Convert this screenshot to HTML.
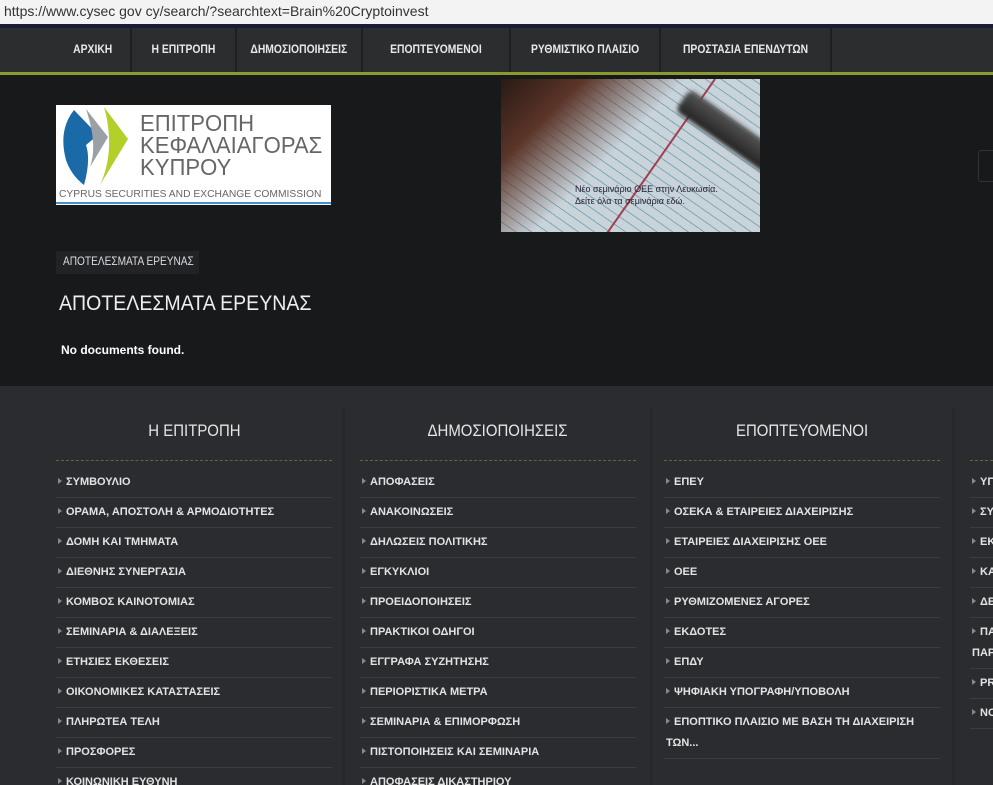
<!DOCTYPE html>
<html><head><meta charset="utf-8">
<style>
*{margin:0;padding:0;box-sizing:border-box}
html,body{width:993px;height:785px;overflow:hidden}
body{background:#18191b;font-family:"Liberation Sans","DejaVu Sans",sans-serif;position:relative}
.url{position:absolute;left:0;top:0;width:993px;height:24px;background:#f3f3f3;color:#333;font-size:14px;line-height:22px;padding-left:4px}
.blue{position:absolute;top:24px;left:0;width:993px;height:4px;background:#1b1a3a}
.nav{position:absolute;top:28px;left:0;width:993px;background:#2b2d2f;border-bottom:3px solid #8a9a2c;height:47px}
.nav span{position:absolute;top:0;height:44px;line-height:44px;color:#e8e8e8;font-size:11.5px;font-weight:bold;text-align:center;border-right:2px solid #1e1f21}
.nav span i{font-style:normal;display:inline-block;transform:scaleX(.9)}
.logo{position:absolute;left:56px;top:105px;width:275px;height:100px;background:#fff;overflow:hidden}
.footer{position:absolute;top:386px;left:0;width:993px;height:399px;background:#2a2c2f}
.col{position:absolute;top:408px;width:276px;overflow:hidden}
.col h3{font-weight:normal;font-size:17px;color:#e6e6e6;text-align:center;height:53px;line-height:46px;border-bottom:1px dashed #5f6a33}
.col h3 i{font-style:normal;display:inline-block;transform:scaleX(.88)}
.col ul{list-style:none;margin-top:7px}
.col li{font-size:11px;font-weight:bold;color:#e3e3e3;line-height:21px;padding:4px 0 4px 2px;border-bottom:1px solid #3a3c3f;white-space:normal}
.col li:before{content:"";display:inline-block;border-left:4px solid #888;border-top:3px solid transparent;border-bottom:3px solid transparent;margin-right:4px;vertical-align:1px}
.vd{position:absolute;top:408px;width:3px;height:377px;background:#27282a}
</style></head><body>
<div class="url">https://www.cysec gov cy/search/?searchtext=Brain%20Cryptoinvest</div>
<div class="blue"></div>
<div class="nav">
<span style="left:55px;width:77px"><i>ΑΡΧΙΚΗ</i></span>
<span style="left:132px;width:105px"><i>Η ΕΠΙΤΡΟΠΗ</i></span>
<span style="left:237px;width:126px"><i>ΔΗΜΟΣΙΟΠΟΙΗΣΕΙΣ</i></span>
<span style="left:363px;width:148px"><i>ΕΠΟΠΤΕΥΟΜΕΝΟΙ</i></span>
<span style="left:511px;width:150px"><i>ΡΥΘΜΙΣΤΙΚΟ ΠΛΑΙΣΙΟ</i></span>
<span style="left:661px;width:171px"><i>ΠΡΟΣΤΑΣΙΑ ΕΠΕΝΔΥΤΩΝ</i></span>
</div>
<div class="logo">
<svg width="275" height="100" style="position:absolute;left:0;top:0">
<path d="M18 5 Q2 25 10 55 Q15 70 28 80 Q35 55 30 40 L42 30 Z" fill="#1a6aa8"/>
<path d="M30 4 L52 32 L34 62 Q42 40 30 4Z" fill="#9aa0a6"/>
<path d="M48 2 L72 34 L44 80 Q60 45 48 2Z" fill="#b3cf2a"/>
<line x1="0" y1="98" x2="275" y2="98" stroke="#4a8fc8" stroke-width="2"/>
</svg>
<div style="position:absolute;left:84px;top:7px;font-size:23px;line-height:22px;color:#666;transform:scaleX(.96);transform-origin:left;white-space:nowrap">ΕΠΙΤΡΟΠΗ<br>ΚΕΦΑΛΑΙΑΓΟΡΑΣ<br>ΚΥΠΡΟΥ</div>
<div style="position:absolute;left:3px;top:83px;font-size:10.5px;color:#666;white-space:nowrap;transform:scaleX(.98);transform-origin:left">CYPRUS SECURITIES AND EXCHANGE COMMISSION</div>
</div>
<div style="position:absolute;left:501px;top:79px;width:259px;height:153px;overflow:hidden;background:repeating-linear-gradient(35deg,#c9d3da 0 8px,#7fa7b5 8px 9px)">
<div style="position:absolute;left:0;top:0;width:259px;height:153px;background:linear-gradient(135deg,#2a1a15 0,#5a3428 20%,rgba(0,0,0,0) 45%)"></div>
<div style="position:absolute;left:150px;top:-20px;width:2px;height:220px;background:#a04050;transform:rotate(35deg)"></div>
<div style="position:absolute;left:170px;top:45px;width:130px;height:26px;background:linear-gradient(#555,#222);transform:rotate(35deg);border-radius:6px;filter:blur(2px)"></div>
<div style="position:absolute;left:74px;top:104px;font-size:9px;line-height:12px;color:#223">Νέο σεμινάριο ΟΕΕ στην Λευκωσία.<br>Δείτε όλα τα σεμινάρια εδώ.</div>
</div>
<div style="position:absolute;left:978px;top:150px;width:20px;height:32px;border:1px solid #333;border-radius:3px"></div>
<div style="position:absolute;left:56px;top:251px;height:23px;width:143px;padding:0 7px;background:#222326;color:#ddd;font-size:11.5px;line-height:23px;white-space:nowrap"><span style="display:inline-block;transform:scaleX(.88);transform-origin:left">ΑΠΟΤΕΛΕΣΜΑΤΑ ΕΡΕΥΝΑΣ</span></div>
<div style="position:absolute;left:59px;top:292px;color:#eee;font-size:21px;transform:scaleX(.93);transform-origin:left;white-space:nowrap">ΑΠΟΤΕΛΕΣΜΑΤΑ ΕΡΕΥΝΑΣ</div>
<div style="position:absolute;left:61px;top:343px;color:#fff;font-size:12px;font-weight:bold">No documents found.</div>
<div class="footer"></div>
<div class="vd" style="left:342px"></div>
<div class="vd" style="left:650px"></div>
<div class="vd" style="left:952px"></div>
<div class="col" style="left:56px"><h3><i>Η ΕΠΙΤΡΟΠΗ</i></h3><ul>
<li>ΣΥΜΒΟΥΛΙΟ</li><li>ΟΡΑΜΑ, ΑΠΟΣΤΟΛΗ &amp; ΑΡΜΟΔΙΟΤΗΤΕΣ</li><li>ΔΟΜΗ ΚΑΙ ΤΜΗΜΑΤΑ</li><li>ΔΙΕΘΝΗΣ ΣΥΝΕΡΓΑΣΙΑ</li><li>ΚΟΜΒΟΣ ΚΑΙΝΟΤΟΜΙΑΣ</li><li>ΣΕΜΙΝΑΡΙΑ &amp; ΔΙΑΛΕΞΕΙΣ</li><li>ΕΤΗΣΙΕΣ ΕΚΘΕΣΕΙΣ</li><li>ΟΙΚΟΝΟΜΙΚΕΣ ΚΑΤΑΣΤΑΣΕΙΣ</li><li>ΠΛΗΡΩΤΕΑ ΤΕΛΗ</li><li>ΠΡΟΣΦΟΡΕΣ</li><li>ΚΟΙΝΩΝΙΚΗ ΕΥΘΥΝΗ</li></ul></div>
<div class="col" style="left:360px"><h3><i>ΔΗΜΟΣΙΟΠΟΙΗΣΕΙΣ</i></h3><ul>
<li>ΑΠΟΦΑΣΕΙΣ</li><li>ΑΝΑΚΟΙΝΩΣΕΙΣ</li><li>ΔΗΛΩΣΕΙΣ ΠΟΛΙΤΙΚΗΣ</li><li>ΕΓΚΥΚΛΙΟΙ</li><li>ΠΡΟΕΙΔΟΠΟΙΗΣΕΙΣ</li><li>ΠΡΑΚΤΙΚΟΙ ΟΔΗΓΟΙ</li><li>ΕΓΓΡΑΦΑ ΣΥΖΗΤΗΣΗΣ</li><li>ΠΕΡΙΟΡΙΣΤΙΚΑ ΜΕΤΡΑ</li><li>ΣΕΜΙΝΑΡΙΑ &amp; ΕΠΙΜΟΡΦΩΣΗ</li><li>ΠΙΣΤΟΠΟΙΗΣΕΙΣ ΚΑΙ ΣΕΜΙΝΑΡΙΑ</li><li>ΑΠΟΦΑΣΕΙΣ ΔΙΚΑΣΤΗΡΙΟΥ</li></ul></div>
<div class="col" style="left:664px"><h3><i>ΕΠΟΠΤΕΥΟΜΕΝΟΙ</i></h3><ul>
<li>ΕΠΕΥ</li><li>ΟΣΕΚΑ &amp; ΕΤΑΙΡΕΙΕΣ ΔΙΑΧΕΙΡΙΣΗΣ</li><li>ΕΤΑΙΡΕΙΕΣ ΔΙΑΧΕΙΡΙΣΗΣ ΟΕΕ</li><li>ΟΕΕ</li><li>ΡΥΘΜΙΖΟΜΕΝΕΣ ΑΓΟΡΕΣ</li><li>ΕΚΔΟΤΕΣ</li><li>ΕΠΔΥ</li><li>ΨΗΦΙΑΚΗ ΥΠΟΓΡΑΦΗ/ΥΠΟΒΟΛΗ</li><li>ΕΠΟΠΤΙΚΟ ΠΛΑΙΣΙΟ ΜΕ ΒΑΣΗ ΤΗ ΔΙΑΧΕΙΡΙΣΗ ΤΩΝ...</li></ul></div>
<div class="col" style="left:970px;width:23px"><h3>&nbsp;</h3><ul>
<li style="white-space:nowrap">ΥΠ</li><li style="white-space:nowrap">ΣΥ</li><li style="white-space:nowrap">ΕΚ</li><li style="white-space:nowrap">ΚΑ</li><li style="white-space:nowrap">ΔΕ</li><li style="white-space:nowrap">ΠΑ<br>ΠΑΡ</li><li style="white-space:nowrap">PR</li><li style="white-space:nowrap">NO</li></ul></div>
</body></html>
